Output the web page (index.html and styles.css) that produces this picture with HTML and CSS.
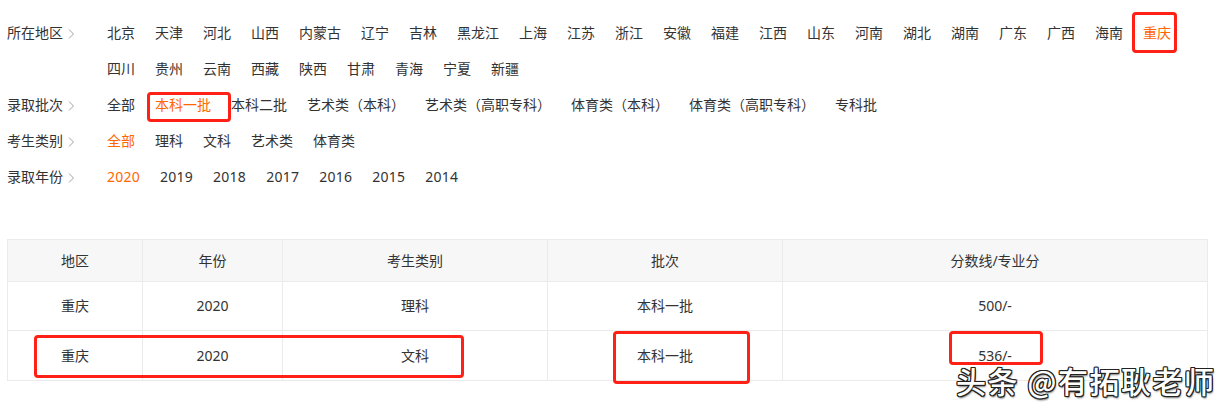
FILE: index.html
```html
<!DOCTYPE html>
<html lang="zh-CN">
<head>
<meta charset="utf-8">
<title>录取分数线</title>
<link rel="stylesheet" href="styles.css">
</head>
<body>
<div class="page">
  <div class="filters">
    <div class="frow">
      <div class="flabel">所在地区<svg class="chev" width="7" height="10" viewBox="0 0 7 10"><polyline points="1,0.5 5.5,5 1,9.5" fill="none" stroke="#a0a0a0" stroke-width="1"/></svg></div>
      <ul class="fitems">
        <li>北京</li><li>天津</li><li>河北</li><li>山西</li><li>内蒙古</li><li>辽宁</li><li>吉林</li><li>黑龙江</li><li>上海</li><li>江苏</li><li>浙江</li><li>安徽</li><li>福建</li><li>江西</li><li>山东</li><li>河南</li><li>湖北</li><li>湖南</li><li>广东</li><li>广西</li><li>海南</li><li class="on">重庆</li><li>四川</li><li>贵州</li><li>云南</li><li>西藏</li><li>陕西</li><li>甘肃</li><li>青海</li><li>宁夏</li><li>新疆</li>
      </ul>
    </div>
    <div class="frow">
      <div class="flabel">录取批次<svg class="chev" width="7" height="10" viewBox="0 0 7 10"><polyline points="1,0.5 5.5,5 1,9.5" fill="none" stroke="#a0a0a0" stroke-width="1"/></svg></div>
      <ul class="fitems">
        <li>全部</li><li class="on">本科一批</li><li>本科二批</li><li>艺术类（本科）</li><li>艺术类（高职专科）</li><li>体育类（本科）</li><li>体育类（高职专科）</li><li>专科批</li>
      </ul>
    </div>
    <div class="frow">
      <div class="flabel">考生类别<svg class="chev" width="7" height="10" viewBox="0 0 7 10"><polyline points="1,0.5 5.5,5 1,9.5" fill="none" stroke="#a0a0a0" stroke-width="1"/></svg></div>
      <ul class="fitems">
        <li class="on">全部</li><li>理科</li><li>文科</li><li>艺术类</li><li>体育类</li>
      </ul>
    </div>
    <div class="frow">
      <div class="flabel">录取年份<svg class="chev" width="7" height="10" viewBox="0 0 7 10"><polyline points="1,0.5 5.5,5 1,9.5" fill="none" stroke="#a0a0a0" stroke-width="1"/></svg></div>
      <ul class="fitems years">
        <li class="on">2020</li><li>2019</li><li>2018</li><li>2017</li><li>2016</li><li>2015</li><li>2014</li>
      </ul>
    </div>
  </div>

  <table class="score">
    <colgroup>
      <col class="c1"><col class="c2"><col class="c3"><col class="c4"><col class="c5">
    </colgroup>
    <thead>
      <tr><th>地区</th><th>年份</th><th>考生类别</th><th>批次</th><th>分数线/专业分</th></tr>
    </thead>
    <tbody>
      <tr><td>重庆</td><td>2020</td><td>理科</td><td>本科一批</td><td>500/-</td></tr>
      <tr class="last"><td>重庆</td><td>2020</td><td>文科</td><td>本科一批</td><td>536/-</td></tr>
    </tbody>
  </table>

  <div class="mark m1"></div>
  <div class="mark m2"></div>
  <div class="mark m3"></div>
  <div class="mark m4"></div>
  <div class="mark m5"></div>

  <div class="watermark">头条 @有拓耿老师</div>
</div>
</body>
</html>
```

FILE: styles.css
```css
html, body {
  margin: 0;
  padding: 0;
  background: #fff;
}

.page {
  position: relative;
  width: 1223px;
  height: 411px;
  overflow: hidden;
  font-family: "Noto Sans", "Noto Sans CJK SC", sans-serif;
  font-size: 14px;
  color: #333;
}

.filters {
  padding: 15px 0 0 7px;
}

.frow {
  display: flex;
  align-items: flex-start;
  line-height: 36px;
}

.flabel {
  width: 100px;
  flex: none;
  display: flex;
  align-items: center;
  height: 36px;
  color: #333;
}

.chev {
  margin-left: 5px;
  margin-top: 1px;
}

.fitems {
  list-style: none;
  margin: 0;
  padding: 0;
  width: 1090px;
  display: flex;
  flex-wrap: wrap;
  column-gap: 20px;
}

.fitems li {
  height: 36px;
  white-space: nowrap;
}

.fitems li.on {
  color: #ff6600;
}

.years li {
  letter-spacing: 0.25px;
}

.score {
  margin: 44px 0 0 7px;
  width: 1201px;
  border-collapse: collapse;
  table-layout: fixed;
  border: 1px solid #ebebeb;
}

.score col.c1 { width: 135px; }
.score col.c2 { width: 140px; }
.score col.c3 { width: 265px; }
.score col.c4 { width: 235px; }

.score th,
.score td {
  border: 1px solid #ebebeb;
  padding: 0;
  text-align: center;
  font-weight: normal;
  color: #333;
}

.score th {
  background: #f7f7f7;
  height: 41px;
  line-height: 41px;
}

.score td {
  height: 48px;
  line-height: 48px;
}

.score tr.last td {
  height: 49px;
  line-height: 49px;
}

.mark {
  position: absolute;
  box-sizing: border-box;
  border: 3px solid #ff2116;
  border-radius: 4px;
}

.m1 { left: 1132px; top: 12px; width: 45px; height: 41px; }
.m2 { left: 147px; top: 92px; width: 84px; height: 30px; }
.m3 { left: 34px; top: 335px; width: 430px; height: 43px; }
.m4 { left: 613px; top: 331px; width: 137px; height: 53px; }
.m5 { left: 949px; top: 331px; width: 94px; height: 34px; }

.watermark {
  position: absolute;
  left: 956px;
  top: 360px;
  font-family: "Noto Sans CJK SC", sans-serif;
  font-size: 30px;
  font-weight: 500;
  letter-spacing: 1.5px;
  line-height: 40px;
  color: #fff;
  white-space: nowrap;
  text-shadow:
    1px 1px 0 #222, -1px -1px 0 #222, 1px -1px 0 #222, -1px 1px 0 #222,
    0 1px 0 #222, 0 -1px 0 #222, 1px 0 0 #222, -1px 0 0 #222,
    1px 2px 2px rgba(0,0,0,0.6);
}
```
